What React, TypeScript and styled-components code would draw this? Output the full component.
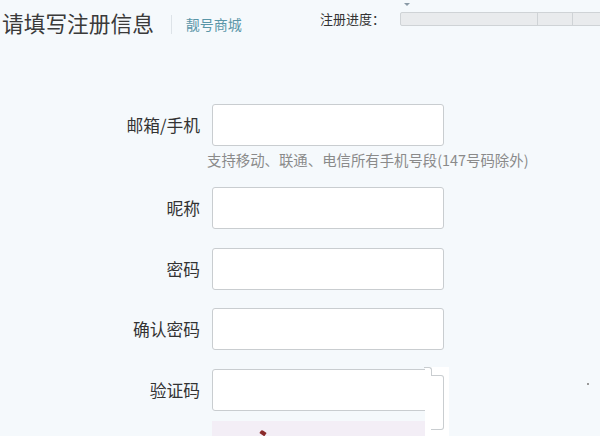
import * as React from 'react';
import styled, { createGlobalStyle } from 'styled-components';

const GlobalStyle = createGlobalStyle`
  html, body {
    margin: 0;
    padding: 0;
    background: #f5f9fc;
    font-family: "Noto Sans CJK SC", "Microsoft YaHei", sans-serif;
    overflow: hidden;
  }
`;

const Page = styled.div`
  width: 600px;
  height: 436px;
  position: relative;
  overflow: hidden;
  background: #f5f9fc;
`;

const Header = styled.div`
  display: flex;
  align-items: center;
  height: 46px;
  padding-left: 2px;
`;

const Title = styled.h1`
  margin: 0;
  font-size: 21.7px;
  font-weight: 400;
  color: #3a3a3a;
  line-height: 1;
`;

const Divider = styled.span`
  width: 1px;
  height: 19px;
  background: #dde3e8;
  margin: 2px 14px 0 17px;
`;

const SubTitle = styled.span`
  font-size: 14px;
  color: #5a96a8;
  margin-top: 2px;
`;

const Progress = styled.div`
  display: flex;
  align-items: center;
  margin-left: auto;
  margin-right: -12px;
  margin-top: -10px;
`;

const ProgressLabel = styled.span`
  font-size: 13px;
  color: #333;
  margin-right: 15px;
`;

const Track = styled.div`
  position: relative;
  display: flex;
  width: 210px;
  height: 12px;
  border: 1px solid #cfd3d6;
  border-radius: 2px;
  background: #e9ebed;
  margin-top: 2px;
`;

const Pointer = styled.span`
  position: absolute;
  left: 3px;
  top: -10px;
  width: 0;
  height: 0;
  border-left: 3px solid transparent;
  border-right: 3px solid transparent;
  border-top: 3px solid #8a9aa6;
`;

const Segment = styled.span<{ $w: number }>`
  width: ${(p) => p.$w}px;
  height: 100%;
  border-right: 1px solid #cfd3d6;
`;

const Form = styled.div`
  display: grid;
  grid-template-columns: 200px 232px;
  column-gap: 12px;
  margin-top: 58px;
`;

const Label = styled.label<{ $gap?: number }>`
  text-align: right;
  font-size: 16.75px;
  color: #333;
  height: 42px;
  line-height: 42px;
  margin-bottom: ${(p) => p.$gap ?? 18.5}px;
`;

const Field = styled.div<{ $gap?: number }>`
  position: relative;
  height: 42px;
  margin-bottom: ${(p) => p.$gap ?? 18.5}px;
`;

const Input = styled.input`
  box-sizing: border-box;
  width: 100%;
  height: 100%;
  border: 1px solid #c9cdd0;
  border-radius: 3px;
  background: #fff;
  outline: none;
`;

const Hint = styled.div`
  grid-column: 2;
  margin: 4px 0 17px -5px;
  font-size: 14.4px;
  color: #8a8a8a;
  white-space: nowrap;
  height: 20px;
  line-height: 20px;
`;

const CaptchaMask = styled.div`
  position: absolute;
  left: 213px;
  top: -2px;
  width: 24px;
  height: 70px;
  background: #fff;
`;

const CaptchaFrame = styled.div`
  position: absolute;
  left: 219px;
  top: 6px;
  width: 12px;
  height: 53px;
  border: 1px solid #c9cdd0;
  border-left: none;
  border-radius: 0 3px 3px 0;
`;

const CaptchaTab = styled.div`
  position: absolute;
  left: 212px;
  top: -2px;
  width: 7px;
  height: 8px;
  border-top: 1px solid #c9cdd0;
  border-right: 1px solid #c9cdd0;
  border-radius: 0 3px 0 0;
`;

const CaptchaImage = styled.div`
  position: absolute;
  left: 0;
  top: 52px;
  width: 213px;
  height: 20px;
  background: #f3eef6;
`;

const Mark = styled.span`
  position: absolute;
  left: 48px;
  top: 62px;
  width: 6px;
  height: 4px;
  background: #8a2a2a;
  transform: rotate(35deg);
  border-radius: 2px 0 0 0;
`;

const Dot = styled.span`
  position: absolute;
  left: 587px;
  top: 383px;
  width: 2px;
  height: 2px;
  background: #999;
`;

export default function App() {
  return (
    <Page>
      <GlobalStyle />
      <Header>
        <Title>请填写注册信息</Title>
        <Divider />
        <SubTitle>靓号商城</SubTitle>
        <Progress>
          <ProgressLabel>注册进度：</ProgressLabel>
          <Track>
            <Pointer />
            <Segment $w={136} />
            <Segment $w={34} />
          </Track>
        </Progress>
      </Header>
      <Form>
        <Label $gap={0}>邮箱/手机</Label>
        <Field $gap={0}>
          <Input />
        </Field>
        <span />
        <Hint>支持移动、联通、电信所有手机号段(147号码除外)</Hint>
        <Label>昵称</Label>
        <Field>
          <Input />
        </Field>
        <Label>密码</Label>
        <Field>
          <Input type="password" />
        </Field>
        <Label>确认密码</Label>
        <Field>
          <Input type="password" />
        </Field>
        <Label>验证码</Label>
        <Field>
          <Input />
          <CaptchaMask />
          <CaptchaTab />
          <CaptchaFrame />
          <CaptchaImage />
          <Mark />
        </Field>
      </Form>
      <Dot />
    </Page>
  );
}
